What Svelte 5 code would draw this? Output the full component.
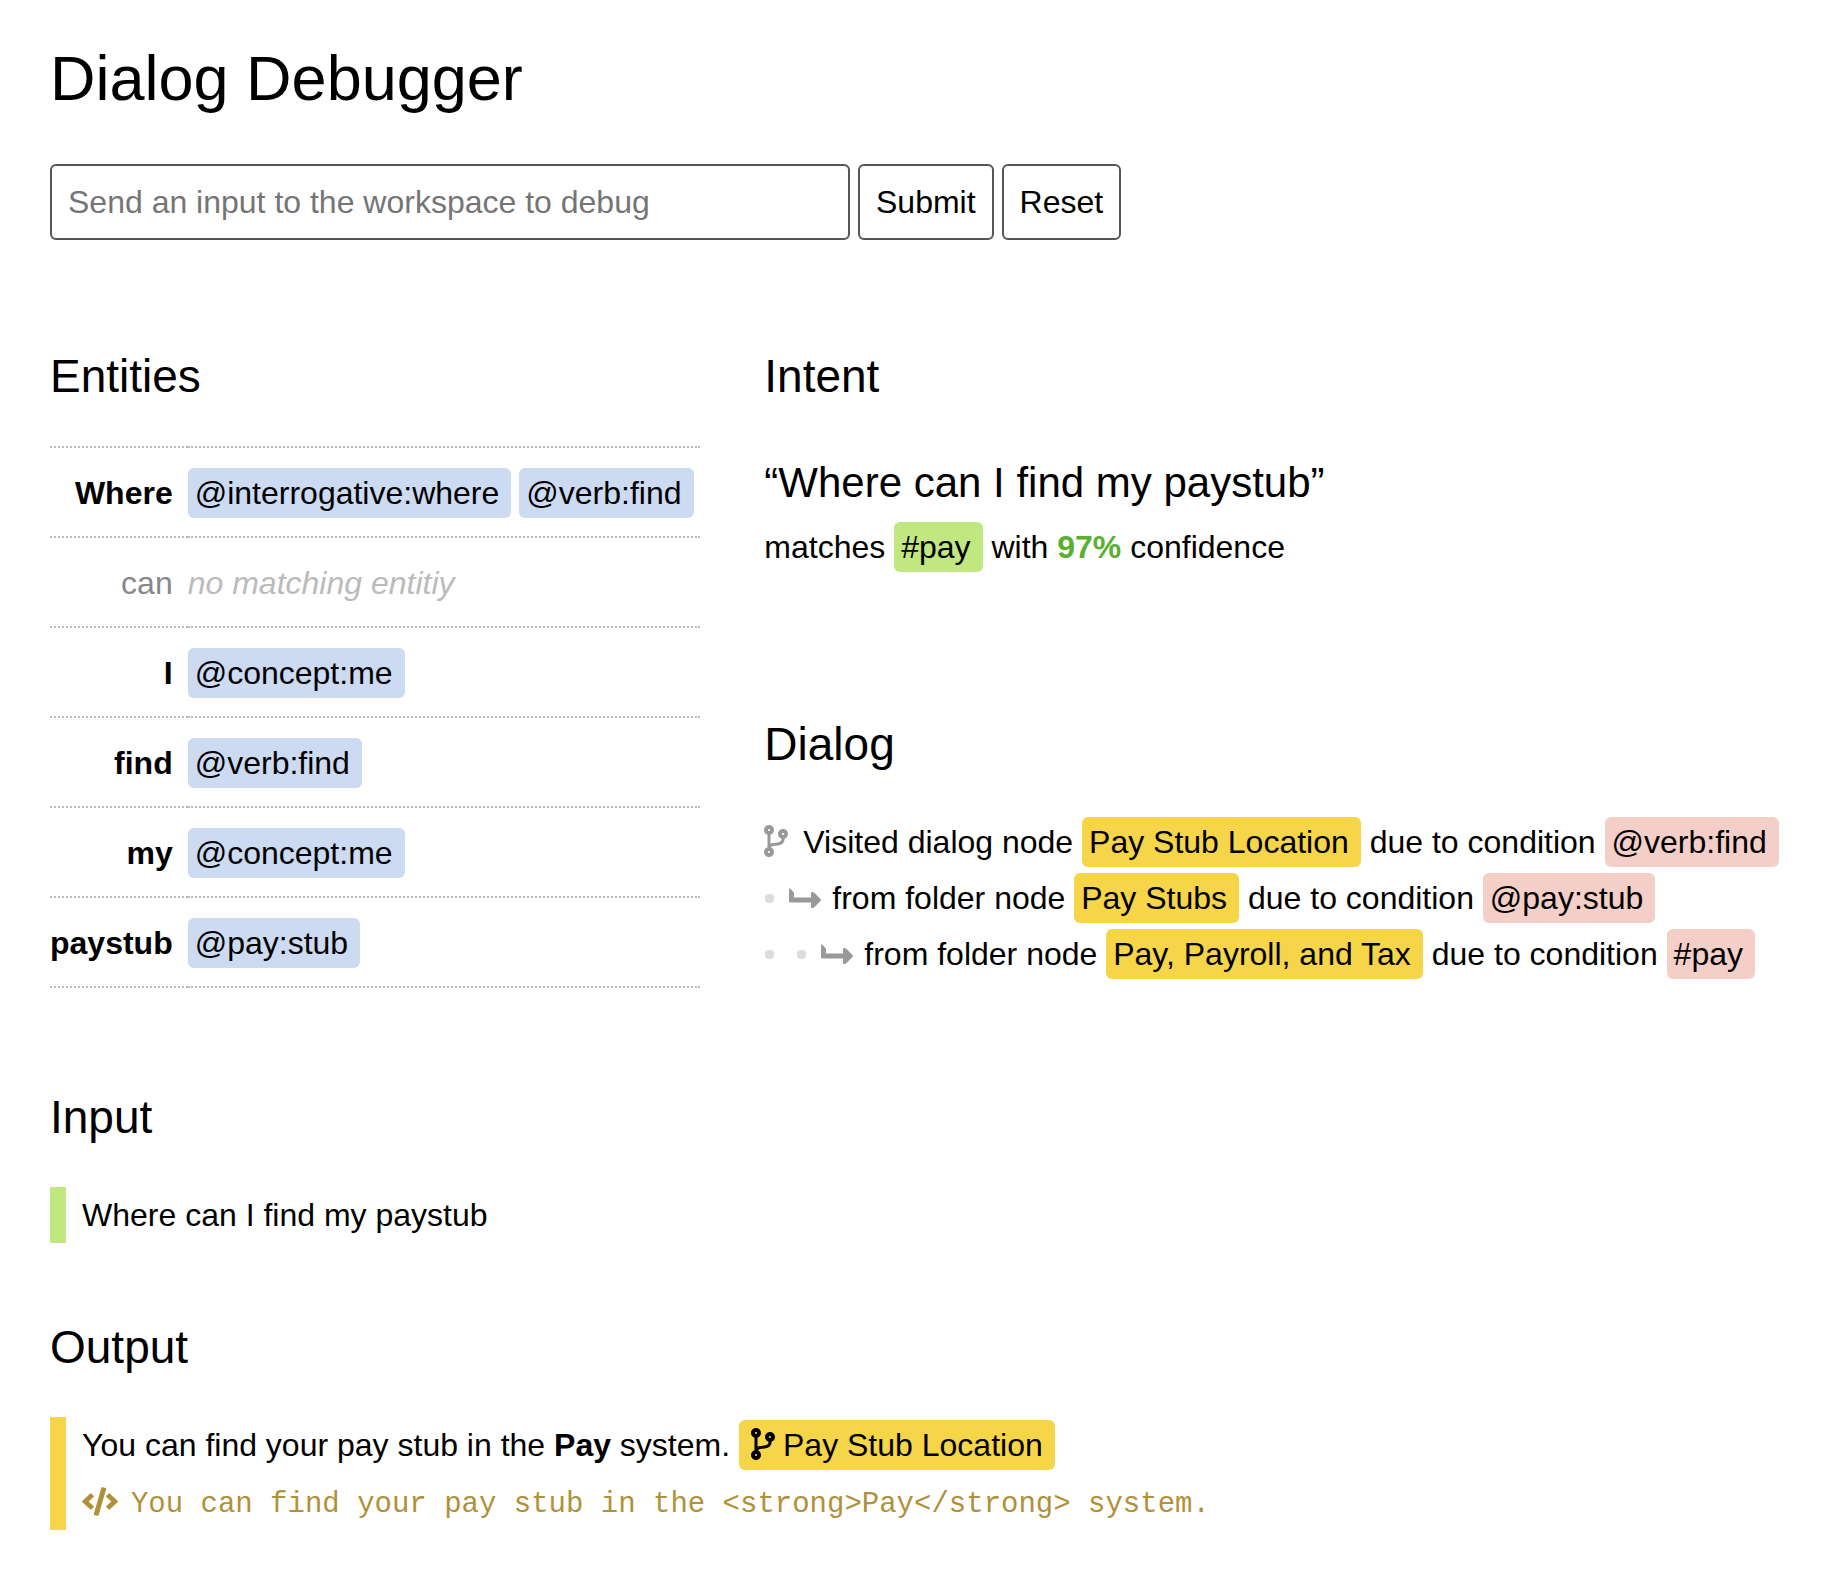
<script>
  let message = $state('');

  const entities = [
    { word: 'Where', matches: ['@interrogative:where', '@verb:find'] },
    { word: 'can', matches: [] },
    { word: 'I', matches: ['@concept:me'] },
    { word: 'find', matches: ['@verb:find'] },
    { word: 'my', matches: ['@concept:me'] },
    { word: 'paystub', matches: ['@pay:stub'] }
  ];

  const visits = [
    { lead: 'Visited dialog node', node: 'Pay Stub Location', condition: '@verb:find' },
    { lead: 'from folder node', node: 'Pay Stubs', condition: '@pay:stub' },
    { lead: 'from folder node', node: 'Pay, Payroll, and Tax', condition: '#pay' }
  ];

  const utterance = 'Where can I find my paystub';
  const source = 'You can find your pay stub in the <strong>Pay</strong> system.';
</script>

{#snippet branch()}
  <svg class="branch" viewBox="0 0 384 512" aria-hidden="true">
    <path d="M384 144c0-44.2-35.8-80-80-80s-80 35.8-80 80c0 36.4 24.3 67.1 57.5 76.8-.6 16.1-4.2 28.5-11 36.9-15.4 19.2-49.3 22.4-85.2 25.7-28.2 2.6-57.4 5.4-81.3 16.9v-144c32.5-10.2 56-40.5 56-76.3 0-44.2-35.8-80-80-80S0 35.8 0 80c0 35.8 23.5 66.1 56 76.3v199.3C23.5 365.9 0 396.2 0 432c0 44.2 35.8 80 80 80s80-35.8 80-80c0-34-21.2-63.1-51.2-74.6 3.1-5.2 7.8-9.8 14.9-13.4 16.2-8.2 40.4-10.4 66.1-12.8 42.2-3.9 90-8.4 118.2-43.4 14-17.4 21.1-39.8 21.6-67.9 31.6-10.8 54.4-40.7 54.4-75.9zM80 64c8.8 0 16 7.2 16 16s-7.2 16-16 16-16-7.2-16-16 7.2-16 16-16zm0 384c-8.8 0-16-7.2-16-16s7.2-16 16-16 16 7.2 16 16-7.2 16-16 16zm224-320c8.8 0 16 7.2 16 16s-7.2 16-16 16-16-7.2-16-16 7.2-16 16-16z" />
  </svg>
{/snippet}

<main>
  <h1>Dialog Debugger</h1>

  <form onsubmit={(e) => e.preventDefault()}>
    <input
      type="text"
      aria-label="Send an input to the workspace to debug"
      placeholder="Send an input to the workspace to debug"
      bind:value={message}
    />
    <button type="submit">Submit</button>
    <button type="reset">Reset</button>
  </form>

  <div class="columns">
    <section>
      <h2>Entities</h2>
      <table>
        <tbody>
          {#each entities as { word, matches }}
            <tr>
              <th scope="row" class:unmatched={!matches.length}>{word}</th>
              <td>
                <div class="tags">
                  {#each matches as match}
                    <span class="chip entity">{match}</span>
                  {:else}
                    <em>no matching entitiy</em>
                  {/each}
                </div>
              </td>
            </tr>
          {/each}
        </tbody>
      </table>
    </section>

    <div class="results">
      <section>
        <h2>Intent</h2>
        <p class="quote">“{utterance}”</p>
        <p>matches <span class="chip intent">#pay</span> with <strong class="score">97%</strong> confidence</p>
      </section>

      <section>
        <h2>Dialog</h2>
        <ul>
          {#each visits as { lead, node, condition }, depth}
            <li>
              {#if depth === 0}
                <span class="root">{@render branch()}</span>
              {:else}
                {#each { length: depth } as _}<span class="dot"></span>{/each}
                <svg class="arrow" viewBox="0 0 32 20" aria-hidden="true">
                  <path d="M0 0.8Q0 -0.3 1 0.6L4.2 3.8Q5 4.6 5 5.6V9.5H22V5.6C22 4 23.8 3.4 25 4.5L31.5 10.9Q32.5 12 31.5 13.1L25 19.5C23.8 20.6 22 20 22 18.4V14.5H1.5Q0 14.5 0 13Z" />
                </svg>
              {/if}
              <span>{lead} <span class="chip node">{node}</span> due to condition <span class="chip condition">{condition}</span></span>
            </li>
          {/each}
        </ul>
      </section>
    </div>
  </div>

  <section class="block">
    <h2>Input</h2>
    <div class="bar said">
      <p>{utterance}</p>
    </div>
  </section>

  <section>
    <h2>Output</h2>
    <div class="bar reply">
      <p>You can find your pay stub in the <strong>Pay</strong> system. <span class="chip node origin">{@render branch()}Pay Stub Location</span></p>
      <p class="source">
        <svg class="markup" viewBox="0 0 640 512" aria-hidden="true">
          <path d="M278.9 511.5l-61-17.7c-6.4-1.8-10-8.5-8.2-14.9L346.2 8.7c1.8-6.4 8.5-10 14.9-8.2l61 17.7c6.4 1.8 10 8.5 8.2 14.9L293.8 503.3c-1.9 6.4-8.5 10.1-14.9 8.2zm-114-112.2l43.5-46.4c4.6-4.9 4.3-12.7-.8-17.2L117 256l90.6-79.7c5.1-4.5 5.5-12.3.8-17.2l-43.5-46.4c-4.5-4.8-12.1-5.1-17-.5L3.8 247.2c-5.1 4.7-5.1 12.8 0 17.5l144.1 135.1c4.9 4.6 12.5 4.4 17-.5zm327.2.6l144.1-135.1c5.1-4.7 5.1-12.8 0-17.5L492.1 112.1c-4.8-4.5-12.4-4.3-17 .5L431.6 159c-4.6 4.9-4.3 12.7.8 17.2L523 256l-90.6 79.7c-5.1 4.5-5.5 12.3-.8 17.2l43.5 46.4c4.5 4.9 12.1 5.1 17 .6z" />
        </svg>
        <code>{source}</code>
      </p>
    </div>
  </section>
</main>

<style>
  :global(body) {
    background: #fff;
  }

  main {
    padding: 42px 50px 62px;
    color: #000;
    font: 32px/56px "Liberation Sans", Arial, sans-serif;
  }

  h1,
  h2,
  p,
  ul {
    margin: 0;
    padding: 0;
  }

  h1 {
    margin-bottom: 50px;
    font-size: 63px;
    font-weight: 400;
    line-height: 72px;
  }

  h2 {
    margin-bottom: 42px;
    font-size: 46px;
    font-weight: 400;
    line-height: 56px;
  }

  form {
    display: flex;
    gap: 8px;
    margin-bottom: 108px;
  }

  input,
  button {
    box-sizing: border-box;
    height: 76px;
    padding: 0 16px;
    border: 2px solid #555;
    border-radius: 6px;
    background: #fff;
    color: #000;
    font: inherit;
  }

  input {
    width: 800px;
    min-width: 0;
  }

  input::placeholder {
    color: #757575;
    opacity: 1;
  }

  .columns {
    display: grid;
    grid-template-columns: 12fr 19fr;
    gap: 64px;
    margin-bottom: 101px;
  }

  .results {
    display: flex;
    flex-direction: column;
    gap: 141px;
  }

  table {
    width: 100%;
    border-collapse: collapse;
  }

  tr {
    border-bottom: 2px dotted #bbb;
  }

  tr:first-child {
    border-top: 2px dotted #bbb;
  }

  th,
  td {
    padding: 17px 0 15px;
  }

  th {
    width: 122px;
    padding-right: 15px;
    text-align: right;
  }

  .unmatched {
    color: #888;
    font-weight: 400;
  }

  em {
    color: #bbb;
  }

  .tags {
    display: flex;
    align-items: center;
    gap: 8px;
    height: 56px;
    white-space: nowrap;
  }

  .chip {
    display: inline-block;
    padding: 0 12px 0 7px;
    border-radius: 6px;
    line-height: 50px;
    white-space: nowrap;
  }

  .entity {
    background: #ccdaf2;
  }

  .intent {
    background: #c0e780;
  }

  .node {
    background: #f6d548;
  }

  .condition {
    background: #f4cfc8;
  }

  .origin {
    padding-left: 12px;
  }

  .quote {
    font-size: 42px;
    line-height: 73px;
  }

  .score {
    color: #59b031;
  }

  ul {
    list-style: none;
  }

  li {
    display: flex;
    align-items: center;
  }

  svg {
    fill: currentColor;
  }

  .branch {
    width: 24px;
    height: 32px;
    vertical-align: -4px;
  }

  .root {
    margin-right: 15px;
    color: #999;
  }

  .origin .branch {
    margin-right: 8px;
  }

  .dot {
    width: 9px;
    height: 9px;
    margin: 0 22px 0 1px;
    border-radius: 4px;
    background: #ddd;
  }

  .arrow {
    flex: none;
    width: 32px;
    height: 20px;
    margin: 0 11px 0 -7px;
    color: #999;
  }

  .block {
    margin-bottom: 76px;
  }

  .bar {
    padding-left: 16px;
    border-left: 16px solid;
  }

  .said {
    border-color: #c0e780;
  }

  .reply {
    border-color: #f6d548;
  }

  .source {
    color: #b09139;
  }

  .markup {
    width: 36px;
    height: 29px;
    margin-right: 4px;
    vertical-align: -4px;
  }

  code {
    font: 29px/50px "Liberation Mono", monospace;
  }
</style>
